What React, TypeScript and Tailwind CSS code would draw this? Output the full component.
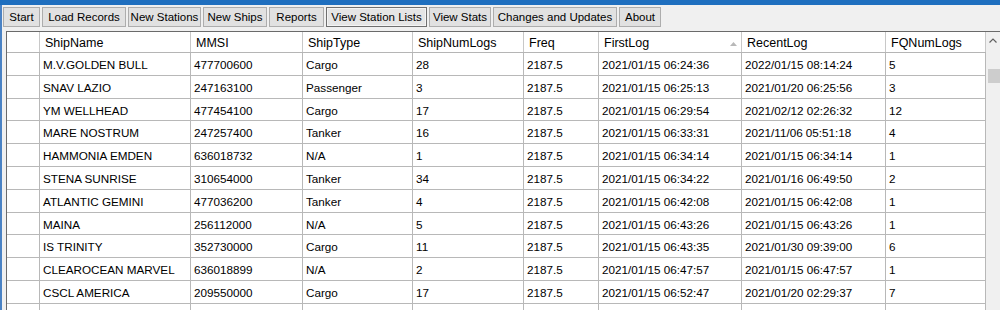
import React from "react";

const rows: string[][] = [
  ["M.V.GOLDEN BULL", "477700600", "Cargo", "28", "2187.5", "2021/01/15 06:24:36", "2022/01/15 08:14:24", "5"],
  ["SNAV LAZIO", "247163100", "Passenger", "3", "2187.5", "2021/01/15 06:25:13", "2021/01/20 06:25:56", "3"],
  ["YM WELLHEAD", "477454100", "Cargo", "17", "2187.5", "2021/01/15 06:29:54", "2021/02/12 02:26:32", "12"],
  ["MARE NOSTRUM", "247257400", "Tanker", "16", "2187.5", "2021/01/15 06:33:31", "2021/11/06 05:51:18", "4"],
  ["HAMMONIA EMDEN", "636018732", "N/A", "1", "2187.5", "2021/01/15 06:34:14", "2021/01/15 06:34:14", "1"],
  ["STENA SUNRISE", "310654000", "Tanker", "34", "2187.5", "2021/01/15 06:34:22", "2021/01/16 06:49:50", "2"],
  ["ATLANTIC GEMINI", "477036200", "Tanker", "4", "2187.5", "2021/01/15 06:42:08", "2021/01/15 06:42:08", "1"],
  ["MAINA", "256112000", "N/A", "5", "2187.5", "2021/01/15 06:43:26", "2021/01/15 06:43:26", "1"],
  ["IS TRINITY", "352730000", "Cargo", "11", "2187.5", "2021/01/15 06:43:35", "2021/01/30 09:39:00", "6"],
  ["CLEAROCEAN MARVEL", "636018899", "N/A", "2", "2187.5", "2021/01/15 06:47:57", "2021/01/15 06:47:57", "1"],
  ["CSCL AMERICA", "209550000", "Cargo", "17", "2187.5", "2021/01/15 06:52:47", "2021/01/20 02:29:37", "7"],
  ["", "", "", "", "", "", "", ""],
];

const headers = ["ShipName", "MMSI", "ShipType", "ShipNumLogs", "Freq", "FirstLog", "RecentLog", "FQNumLogs"];
const widths = ["w-[151px]", "w-[112px]", "w-[110px]", "w-[111px]", "w-[75px]", "w-[143px]", "w-[144px]", "w-[100px]"];

const buttons: { label: string; w: string; active?: boolean }[] = [
  { label: "Start", w: "w-[37px]" },
  { label: "Load Records", w: "w-[84px]" },
  { label: "New Stations", w: "w-[73px]" },
  { label: "New Ships", w: "w-[64px]" },
  { label: "Reports", w: "w-[55px]" },
  { label: "View Station Lists", w: "w-[101px]", active: true },
  { label: "View Stats", w: "w-[62px]" },
  { label: "Changes and Updates", w: "w-[124px]" },
  { label: "About", w: "w-[42px]" },
];

export default function App() {
  return (
    <div
      className="w-[1000px] h-[310px] overflow-hidden bg-[#f0f0f0] flex flex-col text-black"
      style={{ fontFamily: '"Liberation Sans", Arial, sans-serif' }}
    >
      <div className="h-[5px] bg-[#1f6fbf] shrink-0" />
      <div className="flex-1 flex flex-col border-l-2 border-[#4a82c4] min-h-0">
        <div className="flex gap-[2px] ml-[1px] mt-[2px] shrink-0">
          {buttons.map((b) => (
            <div
              key={b.label}
              className={`${b.w} h-[20px] flex items-center justify-center pt-[1px] text-[11.5px] leading-none whitespace-nowrap ${
                b.active
                  ? "bg-[#e5e5e5] border border-[#6f6f6f] shadow-[inset_0_0_0_1px_#f4f4f4]"
                  : "bg-[#e1e1e1] border border-[#adadad]"
              }`}
            >
              {b.label}
            </div>
          ))}
        </div>
        <div className="mt-[4px] ml-[4px] flex-1 flex border-l border-t border-[#6a6a6a] min-h-0">
          <div className="flex flex-col bg-white w-[979px] shrink-0">
            <div className="flex h-[21px] border-b border-[#b5b5b5] shrink-0">
              <div className="w-[33px] border-r border-[#c8c8c8]" />
              {headers.map((h, i) => (
                <div
                  key={h}
                  className={`${widths[i]} relative border-r border-[#c8c8c8] flex items-center pl-[5px] pt-[3px] text-[12.5px] leading-none whitespace-nowrap`}
                >
                  {h}
                  {h === "FirstLog" && (
                    <svg className="absolute right-[4px] top-[10px]" width="7" height="4" viewBox="0 0 7 4">
                      <path d="M0 4 L3.5 0 L7 4 Z" fill="#b8b8b8" />
                    </svg>
                  )}
                </div>
              ))}
            </div>
            {rows.map((r, ri) => (
              <div key={ri} className="flex h-[22.8px] border-b border-[#b8b8b8] shrink-0">
                <div className="w-[33px] border-r border-[#b8b8b8]" />
                {r.map((c, ci) => (
                  <div
                    key={ci}
                    className={`${widths[ci]} border-r border-[#b8b8b8] flex items-center pl-[3px] pt-[2px] text-[11.7px] leading-none whitespace-nowrap overflow-hidden`}
                  >
                    {c}
                  </div>
                ))}
              </div>
            ))}
          </div>
          <div className="flex-1 flex flex-col bg-[#f0f0f0]">
            <div className="h-[17px] flex items-center justify-center">
              <svg width="8" height="5" viewBox="0 0 8 5">
                <path d="M0.5 4.5 L4 1 L7.5 4.5" fill="none" stroke="#606060" strokeWidth="1.2" />
              </svg>
            </div>
            <div className="ml-[2px] mt-[20px] h-[14px] bg-[#cdcdcd]" />
          </div>
        </div>
      </div>
    </div>
  );
}
